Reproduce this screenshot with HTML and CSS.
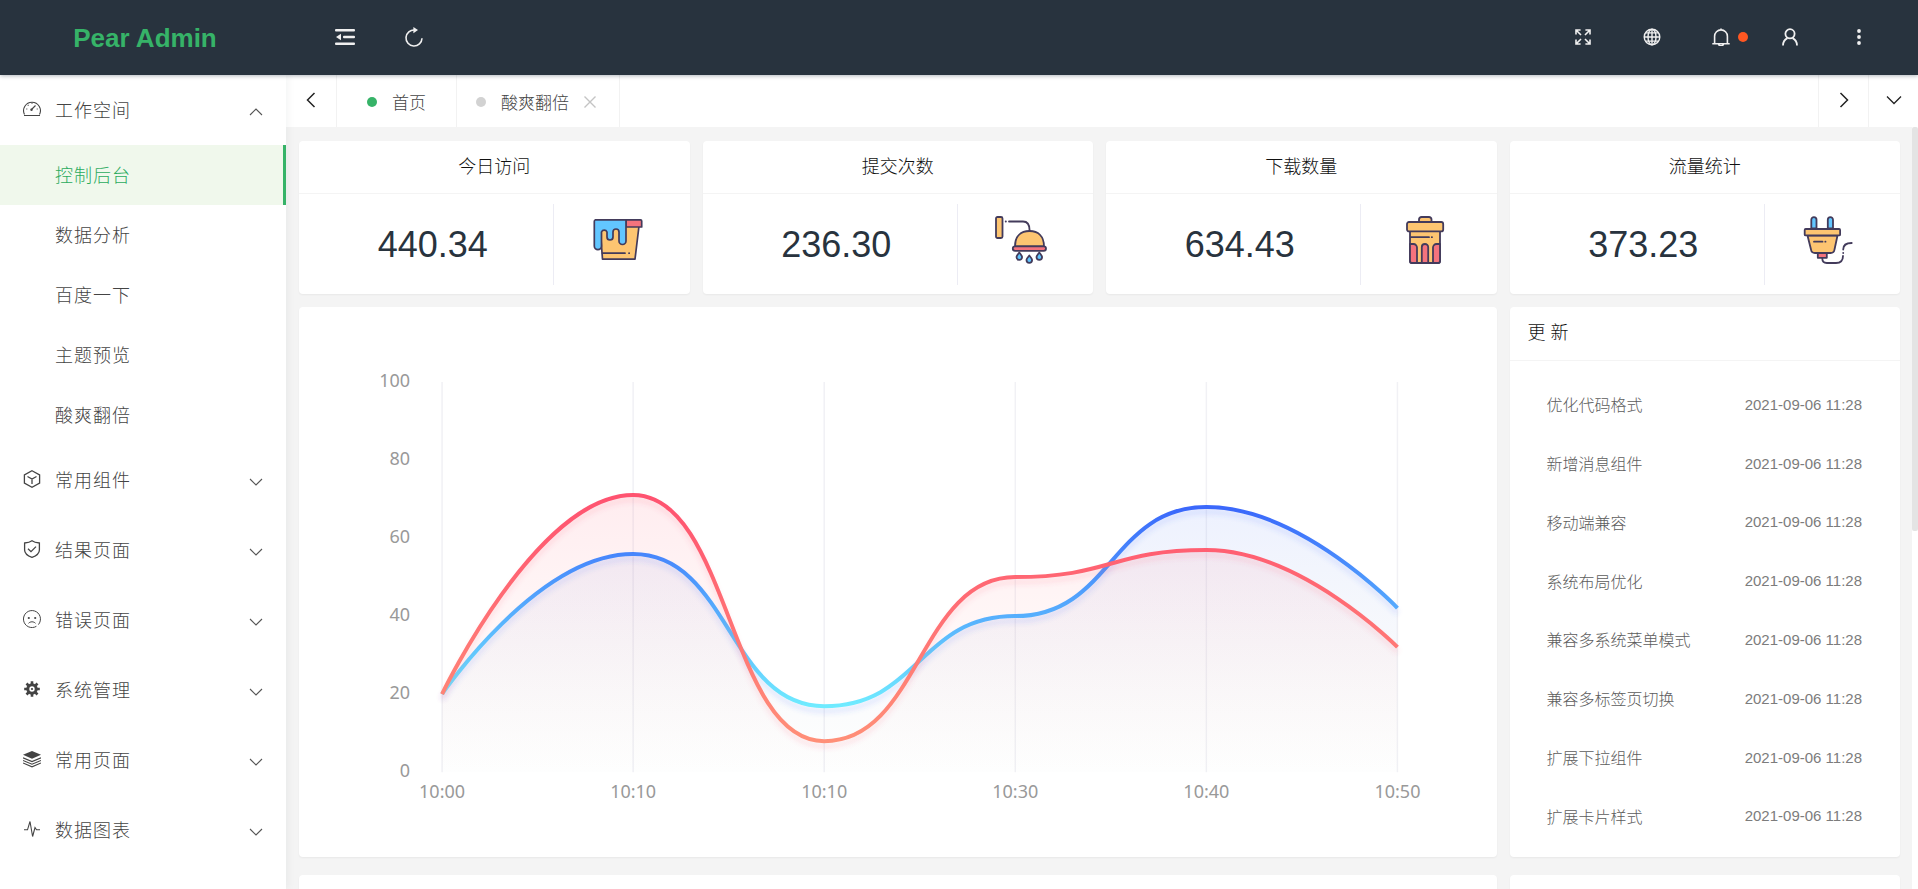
FILE: index.html
```html
<!DOCTYPE html>
<html lang="zh-CN">
<head>
<meta charset="utf-8">
<title>Pear Admin</title>
<link rel="stylesheet" href="styles.css">
</head>
<body>
<svg class="sprite" aria-hidden="true">
  <symbol id="chev-down" viewBox="0 0 14 14"><path d="M1 4l6 6 6-6" fill="none" stroke="currentColor" stroke-width="1.1"/></symbol>
  <symbol id="chev-up" viewBox="0 0 14 14"><path d="M1 10l6-6 6 6" fill="none" stroke="currentColor" stroke-width="1.1"/></symbol>
</svg>
<header class="header">
  <h1 class="logo">Pear Admin</h1>
  <nav class="tools" aria-label="工具">
    <button class="tool" type="button" aria-label="折叠菜单"><svg class="ic20" viewBox="0 0 20 20"><g fill="#f0f0f0"><rect x="0" y="2" width="20" height="2.4" rx="1"/><rect x="8" y="8.8" width="12" height="2.4" rx="1"/><rect x="0" y="15.6" width="20" height="2.4" rx="1"/><path d="M1 10l5-3.2v6.4z"/></g></svg></button>
    <button class="tool" type="button" aria-label="刷新"><svg class="ic20" viewBox="0 0 20 20"><path d="M10.8 3A8 8 0 1 0 18 11.2" fill="none" stroke="#f0f0f0" stroke-width="1.6"/><path d="M9.4 0l4.6 3.1-4.6 3.1z" fill="#f0f0f0"/></svg></button>
  </nav>
  <nav class="tools tools-right" aria-label="用户">
    <button class="tool" type="button" aria-label="全屏"><svg class="ic18" viewBox="0 0 18 18"><g fill="none" stroke="#f0f0f0" stroke-width="1.6"><path d="M2 6.6V2h4.600M2 2l5 5M11.400 2H16v4.600M16 2l-5 5M2 11.400V16h4.600M2 16l5-5M11.400 16H16v-4.600M16 16l-5-5"/></g></svg></button>
    <button class="tool" type="button" aria-label="语言"><svg class="ic18" viewBox="0 0 18 18"><g fill="none" stroke="#f0f0f0" stroke-width="1.4"><circle cx="9" cy="9" r="7.8"/><ellipse cx="9" cy="9" rx="4" ry="7.800"/><path d="M9 1v16M1 9h16M2.500 4.900h13M2.500 13.100h13"/></g></svg></button>
    <button class="tool" type="button" aria-label="消息"><svg class="ic18" viewBox="0 0 18 18"><path d="M2.600 15.500V8.300a6.400 6.400 0 0 1 12.800 0v7.200M.3 15.700h17.400M6.500 16a2.600 2.600 0 0 0 5 0M9 .5v1.500" fill="none" stroke="#f0f0f0" stroke-width="1.600"/></svg><span class="badge"></span></button>
    <button class="tool" type="button" aria-label="账户"><svg class="ic18" viewBox="0 0 18 18"><g fill="none" stroke="#f0f0f0" stroke-width="1.800"><circle cx="9" cy="5.800" r="4.600"/><path d="M2 17.500c0-3.600 1.600-6 4.400-7.400M16 17.500c0-3.600-1.600-6-4.400-7.400"/></g></svg></button>
    <button class="tool" type="button" aria-label="更多"><svg class="ic18" viewBox="0 0 18 18"><g fill="#f0f0f0"><circle cx="9" cy="3" r="1.900"/><circle cx="9" cy="9" r="1.900"/><circle cx="9" cy="15" r="1.900"/></g></svg></button>
  </nav>
</header>
<div class="body">
  <aside class="side">
    <button class="menu" type="button"><svg class="ic18" viewBox="0 0 18 18"><g fill="none" stroke="currentColor" stroke-width="1.100"><path d="M1.500 14.500A8.400 8.400 0 1 1 16.500 14.500M1 15.500h16"/><path d="M8.500 9.500l4-4"/><path d="M3.300 9h1M9 2.800v1M13.700 9h1M4.800 5l.7.7"/></g><circle cx="8.500" cy="9.700" r="1.200" fill="currentColor"/></svg><span class="menu-text">工作空间</span><svg class="chev"><use href="#chev-up"/></svg></button>
    <nav class="sub">
      <a class="sub-item active" href="#">控制后台</a>
      <a class="sub-item" href="#">数据分析</a>
      <a class="sub-item" href="#">百度一下</a>
      <a class="sub-item" href="#">主题预览</a>
      <a class="sub-item" href="#">酸爽翻倍</a>
    </nav>
    <button class="menu" type="button"><svg class="ic18" viewBox="0 0 18 18"><path d="M9 .8l7.600 4.200v8L9 17.200 1.400 13V5zM4.500 6.500L9 9l4.500-2.500M9 9v5" fill="none" stroke="currentColor" stroke-width="1.300"/></svg><span class="menu-text">常用组件</span><svg class="chev"><use href="#chev-down"/></svg></button>
    <button class="menu" type="button"><svg class="ic18" viewBox="0 0 18 18"><path d="M9 .8c2 1.500 4.500 2 7.400 2.200v7c0 3.600-3 5.800-7.400 7.300-4.400-1.500-7.400-3.700-7.400-7.300V3C4.500 2.800 7 2.300 9 .8zM5 8.700l3 2.900 5-5" fill="none" stroke="currentColor" stroke-width="1.300"/></svg><span class="menu-text">结果页面</span><svg class="chev"><use href="#chev-down"/></svg></button>
    <button class="menu" type="button"><svg class="ic18" viewBox="0 0 18 18"><path d="M15.400 14.600a8.500 8.500 0 1 0-2 1.700M5.500 13.300c1.800-2 5.200-2 7 0" fill="none" stroke="currentColor" stroke-width="1"/><circle cx="5.800" cy="8" r="1.100" fill="currentColor"/><circle cx="12.200" cy="8" r="1.100" fill="currentColor"/></svg><span class="menu-text">错误页面</span><svg class="chev"><use href="#chev-down"/></svg></button>
    <button class="menu" type="button"><svg class="ic18" viewBox="0 0 18 18"><circle cx="9" cy="9" r="4.200" fill="none" stroke="currentColor" stroke-width="3"/><g stroke="currentColor" stroke-width="2.600"><path d="M9 1.200v3M9 13.800v3M1.200 9h3M13.800 9h3M3.500 3.500l2 2M12.500 12.500l2 2M14.500 3.500l-2 2M5.500 12.500l-2 2"/></g><circle cx="9" cy="9" r="1.100" fill="currentColor"/></svg><span class="menu-text">系统管理</span><svg class="chev"><use href="#chev-down"/></svg></button>
    <button class="menu" type="button"><svg class="ic18" viewBox="0 0 18 18"><path d="M9 1l9 3.800-9 3.900L0 4.800z" fill="currentColor"/><path d="M0 7.800l9 3.800 9-3.800M0 10.400l9 3.800 9-3.800M0 13l9 3.800 9-3.800" fill="none" stroke="currentColor" stroke-width="1.100"/></svg><span class="menu-text">常用页面</span><svg class="chev"><use href="#chev-down"/></svg></button>
    <button class="menu" type="button"><svg class="ic18" viewBox="0 0 18 18"><path d="M1 9.800h3.500L7 1.500l2.600 15L12 7.500l1.500 2.300H17" fill="none" stroke="currentColor" stroke-width="1.100"/></svg><span class="menu-text">数据图表</span><svg class="chev"><use href="#chev-down"/></svg></button>
  </aside>
  <div class="main">
    <div class="tabs">
      <button class="tab-ctl first" type="button" aria-label="向左"><svg class="ic16" viewBox="0 0 16 16"><path d="M11.500 1L4.500 8l7 7" fill="none" stroke="#222" stroke-width="1.500"/></svg></button>
      <a class="tab home" href="#"><span class="dot on"></span>首页</a>
      <div class="tab page"><span class="dot"></span><a class="tab-link" href="#">酸爽翻倍</a><button class="close" type="button" aria-label="关闭"><svg class="ic12" viewBox="0 0 12 12"><path d="M.5.500l11 11M11.500.500l-11 11" stroke="#c4c4c4" stroke-width="1.400"/></svg></button></div>
      <span class="tab-space"></span>
      <button class="tab-ctl" type="button" aria-label="向右"><svg class="ic16" viewBox="0 0 16 16"><path d="M4.500 1l7 7-7 7" fill="none" stroke="#222" stroke-width="1.500"/></svg></button>
      <button class="tab-ctl" type="button" aria-label="更多标签"><svg class="ic16" viewBox="0 0 16 16"><path d="M1 4.500l7 7 7-7" fill="none" stroke="#222" stroke-width="1.300"/></svg></button>
    </div>
    <div class="view">
      <main class="content">
        <section class="grid">
          <article class="card"><h2 class="stat-title">今日访问</h2><div class="stat"><span class="num">440.34</span><span class="pic">
            <svg class="art" viewBox="0 0 52 48"><g stroke="#433b5b" stroke-width="1.700" stroke-linejoin="round" stroke-linecap="round"><path d="M8 10H47L43 43.200H10.500z" fill="#fdc571"/><path d="M34 3.800H48.500a1.200 1.200 0 0 1 1.200 1.200V11H34z" fill="#f4737d"/><path d="M3.500 3.800H34V25a3.500 3.500 0 0 1-7 0V16a3 3 0 0 0-6 0v5a3 3 0 0 1-6 0V16a3 3 0 0 0-5.500 0V30a3.600 3.600 0 0 1-7.200 0V5.500a1.700 1.700 0 0 1 1.200-1.700z" fill="#62c6ff"/><path d="M10.500 37.200H33M37 37.200h.2" fill="none"/></g></svg></span></div></article>
          <article class="card"><h2 class="stat-title">提交次数</h2><div class="stat"><span class="num">236.30</span><span class="pic">
            <svg class="art" viewBox="0 0 52 48"><g stroke="#433b5b" stroke-width="1.800" stroke-linejoin="round" stroke-linecap="round"><rect x="1" y="1" width="6.500" height="21" rx="1.500" fill="#fdc571"/><path d="M10.700 5.500h.2M14 5.500H28c4.500 0 6.600 3 6.600 9" fill="none"/><path d="M20 30.500C20 20 26 15 34.500 15S49 20 49 30.500z" fill="#fdc571"/><rect x="17.800" y="30.300" width="33.200" height="4.600" rx="2.300" fill="#f4737d"/><g fill="#62c6ff"><path d="M24.300 36.500c2 2.400 2.800 3.500 2.800 4.600a2.800 2.800 0 0 1-5.600 0c0-1.100.8-2.200 2.800-4.600z"/><path d="M44.300 36.500c2 2.400 2.800 3.500 2.800 4.600a2.800 2.800 0 0 1-5.600 0c0-1.100.8-2.200 2.800-4.600z"/><path d="M34.300 39.500c2 2.400 2.800 3.500 2.800 4.600a2.800 2.800 0 0 1-5.600 0c0-1.100.8-2.200 2.800-4.600z"/></g></g></svg></span></div></article>
          <article class="card"><h2 class="stat-title">下载数量</h2><div class="stat"><span class="num">634.43</span><span class="pic">
            <svg class="art" viewBox="0 0 52 48"><g stroke="#433b5b" stroke-width="1.800" stroke-linejoin="round" stroke-linecap="round"><path d="M20 6V3.500a2.500 2.500 0 0 1 2.500-2.500h7.500a2.500 2.500 0 0 1 2.500 2.500V6" fill="#fdc571"/><path d="M11 15H41V45a2 2 0 0 1-2 2H13a2 2 0 0 1-2-2z" fill="#fdc571"/><rect x="8" y="6" width="36.200" height="9.400" rx="2" fill="#fdc571"/><g fill="#f4737d"><path d="M11 28h3.500a3.500 3.500 0 0 1 3.500 3.500V47h-5a2 2 0 0 1-2-2z"/><path d="M41 28h-3.500a3.500 3.500 0 0 0-3.500 3.500V47h5a2 2 0 0 0 2-2z"/><path d="M22.800 47V31.200a3.200 3.200 0 0 1 6.400 0V47z"/></g><path d="M12 21.200H30M32.800 21.200h.2" fill="none"/></g></svg></span></div></article>
          <article class="card"><h2 class="stat-title">流量统计</h2><div class="stat"><span class="num">373.23</span><span class="pic">
            <svg class="art" viewBox="0 0 52 48"><g stroke="#433b5b" stroke-width="1.800" stroke-linejoin="round" stroke-linecap="round"><path d="M9.300 12.500V3.700a2.600 2.600 0 0 1 5.200 0v8.800zM25.800 12.500V3.700a2.600 2.600 0 0 1 5.200 0v8.800z" fill="#62c6ff"/><path d="M5.500 19.500H35.500L32.500 33.500a4 4 0 0 1-4 3.500H13a4 4 0 0 1-4-3.500z" fill="#fdc571"/><rect x="2.700" y="13" width="35.400" height="6.400" rx="1" fill="#fdc571"/><path d="M12 25.700H20.500M23.300 25.700h.2" fill="none"/><rect x="15.800" y="37" width="9" height="4.800" fill="#f4737d"/><path d="M20.300 42.500c0 3 1.800 4.500 4.500 4.500H34c4.500 0 7-2.200 7-7M41.200 36.800v.2M41.200 33.500c0-4.500 3-6.500 8.500-6.500" fill="none"/></g></svg></span></div></article>
        </section>
        <section class="grid row-main">
          <article class="card chart-card">
            <svg class="chart" viewBox="0 0 1197 550" role="img" aria-label="访问趋势">
              <defs>
                <linearGradient id="lineBlue" gradientUnits="userSpaceOnUse" x1="0" y1="200" x2="0" y2="399"><stop offset="0" stop-color="#3a67fb"/><stop offset="1" stop-color="#6febff"/></linearGradient>
                <linearGradient id="lineRed" gradientUnits="userSpaceOnUse" x1="0" y1="188" x2="0" y2="434"><stop offset="0" stop-color="#ff5270"/><stop offset="1" stop-color="#ff8f78"/></linearGradient>
                <linearGradient id="areaBlue" gradientUnits="userSpaceOnUse" x1="0" y1="200" x2="0" y2="465"><stop offset="0" stop-color="#3a67fb" stop-opacity=".09"/><stop offset="1" stop-color="#7a9a9a" stop-opacity=".01"/></linearGradient>
                <linearGradient id="areaRed" gradientUnits="userSpaceOnUse" x1="0" y1="188" x2="0" y2="465"><stop offset="0" stop-color="#ff5270" stop-opacity=".11"/><stop offset="1" stop-color="#ff8f78" stop-opacity="0"/></linearGradient>
                <filter id="glowBlue" filterUnits="userSpaceOnUse" x="100" y="150" width="1040" height="340"><feDropShadow dx="0" dy="5" stdDeviation="2.500" flood-color="#3a67fb" flood-opacity=".15"/></filter>
                <filter id="glowRed" filterUnits="userSpaceOnUse" x="100" y="150" width="1040" height="340"><feDropShadow dx="0" dy="5" stdDeviation="2.500" flood-color="#ff5270" flood-opacity=".15"/></filter>
              </defs>
              <path d="M143 75V465M334 75V465M525 75V465M716 75V465M907 75V465M1098 75V465" class="axis"/>
              <path fill="url(#areaBlue)" d="M143 387C143 387 238 247 334 247C430 247 430 399 525 399C620 399 620 309 716 309C812 309 812 200 907 200C1002 200 1098 301 1098 301V465H143z"/>
              <path fill="url(#areaRed)" d="M143 387C143 387 238 188 334 188C430 188 430 434 525 434C620 434 620 270 716 270C812 270 812 243 907 243C1002 243 1098 340 1098 340V465H143z"/>
              <path class="line" stroke="url(#lineBlue)" filter="url(#glowBlue)" d="M143 387C143 387 238 247 334 247C430 247 430 399 525 399C620 399 620 309 716 309C812 309 812 200 907 200C1002 200 1098 301 1098 301"/>
              <path class="line" stroke="url(#lineRed)" filter="url(#glowRed)" d="M143 387C143 387 238 188 334 188C430 188 430 434 525 434C620 434 620 270 716 270C812 270 812 243 907 243C1002 243 1098 340 1098 340"/>
              <g class="ylab"><text x="111" y="80">100</text><text x="111" y="158">80</text><text x="111" y="236">60</text><text x="111" y="314">40</text><text x="111" y="392">20</text><text x="111" y="470">0</text></g>
              <g class="xlab"><text x="143" y="491">10:00</text><text x="334" y="491">10:10</text><text x="525" y="491">10:10</text><text x="716" y="491">10:30</text><text x="907" y="491">10:40</text><text x="1098" y="491">10:50</text></g>
            </svg>
          </article>
          <article class="card updates">
            <h2 class="card-title">更 新</h2>
            <ul class="list">
              <li class="row"><span>优化代码格式</span><time class="time">2021-09-06 11:28</time></li>
              <li class="row"><span>新增消息组件</span><time class="time">2021-09-06 11:28</time></li>
              <li class="row"><span>移动端兼容</span><time class="time">2021-09-06 11:28</time></li>
              <li class="row"><span>系统布局优化</span><time class="time">2021-09-06 11:28</time></li>
              <li class="row"><span>兼容多系统菜单模式</span><time class="time">2021-09-06 11:28</time></li>
              <li class="row"><span>兼容多标签页切换</span><time class="time">2021-09-06 11:28</time></li>
              <li class="row"><span>扩展下拉组件</span><time class="time">2021-09-06 11:28</time></li>
              <li class="row"><span>扩展卡片样式</span><time class="time">2021-09-06 11:28</time></li>
            </ul>
          </article>
        </section>
        <section class="grid row-next">
          <article class="card next wide"></article>
          <article class="card next"></article>
        </section>
      </main>
      <div class="track"><div class="thumb"></div></div>
    </div>
  </div>
</div>
</body>
</html>
```
FILE: styles.css
```css
* { box-sizing: border-box; }
html, body { height: 100%; }
body {
  margin: 0;
  display: flex;
  flex-direction: column;
  overflow: hidden;
  background: #f4f4f4;
  color: #111;
  font-family: "Liberation Sans", "Noto Sans CJK SC", sans-serif;
  font-weight: 300;
}
button { border: 0; background: none; padding: 0; font: inherit; color: inherit; cursor: pointer; }
a { color: inherit; text-decoration: none; }
h1, h2, ul { margin: 0; padding: 0; }
.sprite { display: none; }
.ic20 { width: 20px; height: 20px; }
.ic18 { width: 18px; height: 18px; flex: none; }
.ic16 { width: 16px; height: 16px; }
.ic12 { width: 12px; height: 12px; display: block; }

.header {
  position: relative;
  z-index: 3;
  flex: none;
  height: 75px;
  display: flex;
  align-items: center;
  background: #28333e;
  box-shadow: 0 1px 4px rgba(0, 21, 41, .3);
}
.logo {
  flex: none;
  width: 286px;
  padding: 2px 0 0 4px;
  text-align: center;
  color: #36b368;
  font-size: 26px;
  font-weight: 700;
}
.tools { display: flex; padding: 0 25px 0 24px; }
.tools-right { margin-left: auto; }
.tool {
  position: relative;
  width: 69px;
  height: 75px;
  padding-bottom: 2px;
  display: flex;
  align-items: center;
  justify-content: center;
}
.badge {
  position: absolute;
  left: 52px;
  top: 32px;
  width: 10px;
  height: 10px;
  border-radius: 50%;
  background: #ff5722;
}

.body { flex: 1; min-height: 0; display: flex; }
.side {
  position: relative;
  z-index: 2;
  flex: none;
  width: 286px;
  overflow: hidden;
  background: #fff;
  color: #444;
  font-size: 18px;
  box-shadow: 2px 0 8px rgba(29, 35, 41, .05);
}
.menu {
  width: 100%;
  height: 70px;
  padding: 0 23px 2px;
  display: flex;
  align-items: center;
  gap: 14px;
  text-align: left;
}
.menu-text, .sub-item { letter-spacing: 1px; }
.chev { width: 14px; height: 14px; margin: 6px 0 0 auto; color: #555; }
.sub { display: block; }
.sub-item {
  display: block;
  height: 60px;
  line-height: 62px;
  padding-left: 55px;
}
.active {
  background: #f0f8ec;
  color: #2bab5e;
  border-right: 3px solid #36b368;
}

.main { flex: 1; min-width: 0; display: flex; flex-direction: column; }
.tabs {
  flex: none;
  height: 52px;
  display: flex;
  background: #fff;
  color: #444;
  font-size: 17px;
}
.tab-ctl {
  width: 50px;
  padding-bottom: 2px;
  display: flex;
  align-items: center;
  justify-content: center;
  border-left: 1px solid #f2f2f2;
}
.first { width: 51px; border-left: 0; border-right: 1px solid #f2f2f2; }
.tab {
  display: flex;
  align-items: center;
  gap: 15px;
  padding-top: 1px;
  border-right: 1px solid #f2f2f2;
}
.home { padding-left: 30px; padding-right: 30px; }
.page { padding-left: 19px; padding-right: 23px; }
.tab-space { flex: 1; }
.dot { width: 10px; height: 10px; border-radius: 50%; background: #d2d2d2; }
.on { background: #36b368; }

.view { flex: 1; min-height: 0; display: flex; }
.content { flex: 1; min-width: 0; overflow: hidden; padding: 14px 12px 0 13px; }
.track { flex: none; width: 6px; background: #fff; }
.thumb { height: 53%; border-radius: 2px; background: #e4e4e4; }

.grid { display: grid; grid-template-columns: repeat(4, minmax(0, 1fr)); gap: 13px; }
.row-main { margin-top: 13px; }
.row-next { margin-top: 18px; }
.card {
  background: #fff;
  border-radius: 4px;
  box-shadow: 0 1px 2px rgba(0, 0, 0, .05);
}
.stat-title {
  height: 53px;
  line-height: 53px;
  border-bottom: 1px solid #f4f4f4;
  text-align: center;
  font-size: 18px;
  font-weight: 300;
}
.stat {
  display: grid;
  grid-template-columns: 21fr 11fr;
  padding: 10px 8px 9px 13px;
}
.num {
  height: 81px;
  line-height: 81px;
  border-right: 1px solid #ececf4;
  text-align: center;
  color: #28333e;
  font-size: 36px;
}
.pic { display: flex; justify-content: center; padding-top: 12px; }
.art { width: 52px; height: 48px; }

.chart-card { grid-column: span 3; }
.chart { display: block; width: 100%; }
.axis { fill: none; stroke: #f1f1f5; stroke-width: 1.5; }
.line { fill: none; stroke-width: 4; }
.ylab, .xlab { fill: #999; font-family: "Noto Sans", sans-serif; font-size: 18px; font-weight: 400; }
.ylab { text-anchor: end; }
.xlab { text-anchor: middle; }

.updates { display: flex; flex-direction: column; }
.card-title {
  height: 54px;
  line-height: 53px;
  padding-left: 18px;
  border-bottom: 1px solid #f4f4f4;
  font-size: 18px;
  font-weight: 300;
}
.list {
  flex: 1;
  display: grid;
  grid-auto-rows: 1fr;
  padding: 14px 38px 12px 37px;
  list-style: none;
  color: #5c5c5c;
  font-size: 16px;
}
.row { display: flex; align-items: center; justify-content: space-between; }
.time { font-size: 15px; color: #7c7c7c; }
.next { height: 300px; }
.wide { grid-column: span 3; }
```
